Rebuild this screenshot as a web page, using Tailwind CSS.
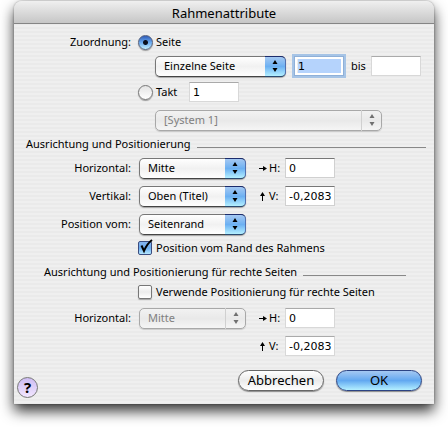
<!DOCTYPE html>
<html lang="de">
  <head>
    <meta charset="UTF-8" />
    <meta name="viewport" content="width=device-width, initial-scale=1.0" />
    <title>Rahmenattribute</title>
    <script src="https://cdn.jsdelivr.net/npm/@tailwindcss/browser@4"></script>
  </head>
  <body class="bg-white px-3.5 pt-px pb-6 font-['Noto_Sans','Open_Sans',sans-serif] text-[11px] leading-4 text-black">
    <main class="rounded-t-lg bg-[#eee] bg-[repeating-linear-gradient(180deg,#efefef_0px,#efefef_2px,#eaeaea_2px,#eaeaea_4px)] shadow-[0_0_2px_rgba(0,0,0,0.4),0_7px_14px_rgba(0,0,0,0.8)]">
      <header class="h-[23px] rounded-t-lg border-b border-[#858585] bg-linear-to-b from-[#f0f0f0] to-[#c6c6c6]">
        <h1 class="text-center text-[13px] leading-6">Rahmenattribute</h1>
      </header>

      <form class="pt-1.5">
        <!-- Zuordnung -->
        <div class="flex h-6 items-center">
          <span class="w-[117px] text-right">Zuordnung:</span>
          <input id="seite" type="radio" name="zuordnung" checked class="ml-[7px] size-[15px] appearance-none rounded-full border border-[#55607c] bg-[radial-gradient(circle_at_50%_50%,#0a1020_0px,#0a1020_2px,transparent_3px),linear-gradient(#2f5cb8,#6aaaf0_50%,#c4f0ff)] shadow-[0_1px_1px_rgba(0,0,0,0.35)]" />
          <label for="seite" class="ml-[3px]">Seite</label>
        </div>
        <div class="flex h-6 items-center pl-[141px]">
          <div class="relative h-[21px] w-[131px]">
            <select aria-label="Seitenbereich" class="block h-full w-full appearance-none rounded-[5px] border border-[#777] border-b-[#444] bg-linear-to-b from-white via-[#f1f1f1] to-white pl-2 shadow-[0_1px_1px_rgba(0,0,0,0.3)]">
              <option>Einzelne Seite</option>
            </select>
            <svg class="pointer-events-none absolute inset-y-0 right-0 h-[21px] w-[21px] rounded-r-[5px] border border-l-0 border-[#5070b0] border-t-[#1c2c6c] border-b-[#2a4a70] bg-linear-to-b from-[#a4c8f2] via-[#6cb0f2] to-[#b4f0ff]" viewBox="0 0 20 19"><path d="M10 3l2.5 4h-5zM10 15l2.5-4h-5z" fill="#000" /></svg>
          </div>
          <input type="text" value="1" aria-label="Von Seite" class="ml-2 h-5 w-[50px] border border-[#8fb0d8] bg-[#b5d3fc] bg-clip-content p-0.5 pl-[3px] font-['DejaVu_Sans',sans-serif] shadow-[inset_0_0_0_2px_#fff,0_0_0_2px_#a6c4e6] outline-none" />
          <label for="bis" class="ml-[7px] w-5">bis</label>
          <input id="bis" type="text" class="h-5 w-[50px] border border-[#d8d8d8] border-t-[#aaa] bg-white pl-[3px] font-['DejaVu_Sans',sans-serif]" />
        </div>
        <div class="flex h-7 items-center pl-[124px]">
          <input id="takt" type="radio" name="zuordnung" class="size-[15px] appearance-none rounded-full border border-[#777] bg-linear-to-b from-[#e4e4e4] to-white shadow-[0_1px_1px_rgba(0,0,0,0.35)]" />
          <label for="takt" class="ml-[3px] w-[33px]">Takt</label>
          <input type="text" value="1" aria-label="Taktnummer" class="h-5 w-[50px] border border-[#d8d8d8] border-t-[#aaa] bg-white pl-[3px] font-['DejaVu_Sans',sans-serif]" />
        </div>
        <div class="flex h-7 items-center pl-[141px]">
          <div class="relative h-[21px] w-[227px]">
            <select disabled aria-label="System" class="block h-full w-full appearance-none rounded-[5px] border border-[#a8a8a8] bg-linear-to-b from-[#f2f2f2] via-[#e9e9e9] to-[#f5f5f5] pl-2 text-[#808080] opacity-100 shadow-[0_1px_1px_rgba(0,0,0,0.15)]">
              <option>[System 1]</option>
            </select>
            <svg class="pointer-events-none absolute inset-y-0 right-0 h-[21px] w-[21px] border-l border-[#d0d0d0]" viewBox="0 0 20 21"><path d="M10 4l2.5 4h-5zM10 16l2.5-4h-5z" fill="#707070" /></svg>
          </div>
        </div>

        <!-- Ausrichtung und Positionierung -->
        <div class="mr-2 flex h-5 items-center pl-3">
          <h2>Ausrichtung und Positionierung</h2>
          <hr class="mt-1.5 ml-1.5 flex-1 border-[#888]" />
        </div>
        <div class="flex h-7 items-center">
          <label for="horizontal" class="w-[117px] text-right">Horizontal:</label>
          <div class="relative ml-2 h-[21px] w-[107px]">
            <select id="horizontal" class="block h-full w-full appearance-none rounded-[5px] border border-[#777] border-b-[#444] bg-linear-to-b from-white via-[#f1f1f1] to-white pl-2 shadow-[0_1px_1px_rgba(0,0,0,0.3)]">
              <option>Mitte</option>
            </select>
            <svg class="pointer-events-none absolute inset-y-0 right-0 h-[21px] w-[21px] rounded-r-[5px] border border-l-0 border-[#5070b0] border-t-[#1c2c6c] border-b-[#2a4a70] bg-linear-to-b from-[#a4c8f2] via-[#6cb0f2] to-[#b4f0ff]" viewBox="0 0 20 19"><path d="M10 3l2.5 4h-5zM10 15l2.5-4h-5z" fill="#000" /></svg>
          </div>
          <label for="h1" class="ml-3 flex w-[27px] items-center gap-0.5">
            <svg class="h-[9px] w-[9px]" viewBox="0 0 9 9"><path d="M1 4.5h6" stroke="#000" /><path d="M5 2l4 2.5-4 2.5z" /></svg>
            <span>H:</span>
          </label>
          <input id="h1" type="text" value="0" class="h-5 w-[50px] border border-[#d0d0d0] border-t-[#777] bg-white pl-[3px] font-['DejaVu_Sans',sans-serif]" />
        </div>
        <div class="flex h-7 items-center">
          <label for="vertikal" class="w-[117px] text-right">Vertikal:</label>
          <div class="relative ml-2 h-[21px] w-[107px]">
            <select id="vertikal" class="block h-full w-full appearance-none rounded-[5px] border border-[#777] border-b-[#444] bg-linear-to-b from-white via-[#f1f1f1] to-white pl-2 shadow-[0_1px_1px_rgba(0,0,0,0.3)]">
              <option>Oben (Titel)</option>
            </select>
            <svg class="pointer-events-none absolute inset-y-0 right-0 h-[21px] w-[21px] rounded-r-[5px] border border-l-0 border-[#5070b0] border-t-[#1c2c6c] border-b-[#2a4a70] bg-linear-to-b from-[#a4c8f2] via-[#6cb0f2] to-[#b4f0ff]" viewBox="0 0 20 19"><path d="M10 3l2.5 4h-5zM10 15l2.5-4h-5z" fill="#000" /></svg>
          </div>
          <label for="v1" class="ml-3 flex w-[27px] items-center gap-0.5">
            <svg class="h-[9px] w-[9px]" viewBox="0 0 9 9"><path d="M4.5 9V2" stroke="#000" /><path d="M2 4l2.5-4 2.5 4z" /></svg>
            <span>V:</span>
          </label>
          <input id="v1" type="text" value="-0,2083" class="h-5 w-[50px] border border-[#d0d0d0] border-t-[#777] bg-white pl-[3px] font-['DejaVu_Sans',sans-serif]" />
        </div>
        <div class="flex h-7 items-center">
          <label for="position" class="w-[117px] text-right">Position vom:</label>
          <div class="relative ml-2 h-[21px] w-[107px]">
            <select id="position" class="block h-full w-full appearance-none rounded-[5px] border border-[#777] border-b-[#444] bg-linear-to-b from-white via-[#f1f1f1] to-white pl-2 shadow-[0_1px_1px_rgba(0,0,0,0.3)]">
              <option>Seitenrand</option>
            </select>
            <svg class="pointer-events-none absolute inset-y-0 right-0 h-[21px] w-[21px] rounded-r-[5px] border border-l-0 border-[#5070b0] border-t-[#1c2c6c] border-b-[#2a4a70] bg-linear-to-b from-[#a4c8f2] via-[#6cb0f2] to-[#b4f0ff]" viewBox="0 0 20 19"><path d="M10 3l2.5 4h-5zM10 15l2.5-4h-5z" fill="#000" /></svg>
          </div>
        </div>
        <div class="flex h-5 items-center pl-[124px]">
          <div class="relative size-3.5">
            <input id="rand" type="checkbox" checked class="block size-3.5 appearance-none rounded-[2px] border border-[#3a4c80] bg-linear-to-b from-[#84b4ee] via-[#6cacf0] to-[#b4e8ff]" />
            <svg class="pointer-events-none absolute -top-0.5 left-0 h-4 w-4" viewBox="0 0 16 16"><path d="M3.5 6.5L6 12C8 7 10 4 14 1" fill="none" stroke="#000" stroke-width="2" /></svg>
          </div>
          <label for="rand" class="ml-1">Position vom Rand des Rahmens</label>
        </div>

        <!-- rechte Seiten -->
        <div class="mt-1 mr-7 flex h-5 items-center pl-[30px]">
          <h2>Ausrichtung und Positionierung für rechte Seiten</h2>
          <hr class="mt-1.5 ml-1.5 flex-1 border-[#888]" />
        </div>
        <div class="flex h-5 items-center pl-[124px]">
          <input id="rechte" type="checkbox" class="size-3.5 appearance-none rounded-[2px] border border-[#777] bg-linear-to-b from-white via-[#ececec] to-white shadow-[0_1px_1px_rgba(0,0,0,0.3)]" />
          <label for="rechte" class="ml-1">Verwende Positionierung für rechte Seiten</label>
        </div>
        <div class="mt-0.5 flex h-7 items-center">
          <label for="horizontal2" class="w-[117px] text-right">Horizontal:</label>
          <div class="relative ml-2 h-[21px] w-[107px]">
            <select id="horizontal2" disabled class="block h-full w-full appearance-none rounded-[5px] border border-[#a8a8a8] bg-linear-to-b from-[#f2f2f2] via-[#e9e9e9] to-[#f5f5f5] pl-2 text-[#808080] opacity-100 shadow-[0_1px_1px_rgba(0,0,0,0.15)]">
              <option>Mitte</option>
            </select>
            <svg class="pointer-events-none absolute inset-y-0 right-0 h-[21px] w-[21px] border-l border-[#d0d0d0]" viewBox="0 0 20 21"><path d="M10 4l2.5 4h-5zM10 16l2.5-4h-5z" fill="#707070" /></svg>
          </div>
          <label for="h2" class="ml-3 flex w-[27px] items-center gap-0.5">
            <svg class="h-[9px] w-[9px]" viewBox="0 0 9 9"><path d="M1 4.5h6" stroke="#000" /><path d="M5 2l4 2.5-4 2.5z" /></svg>
            <span>H:</span>
          </label>
          <input id="h2" type="text" value="0" class="h-5 w-[50px] border border-[#d8d8d8] border-t-[#aaa] bg-white pl-[3px] font-['DejaVu_Sans',sans-serif]" />
        </div>
        <div class="flex h-7 items-center pl-[244px]">
          <label for="v2" class="flex w-[27px] items-center gap-0.5">
            <svg class="h-[9px] w-[9px]" viewBox="0 0 9 9"><path d="M4.5 9V2" stroke="#000" /><path d="M2 4l2.5-4 2.5 4z" /></svg>
            <span>V:</span>
          </label>
          <input id="v2" type="text" value="-0,2083" class="h-5 w-[50px] border border-[#d8d8d8] border-t-[#aaa] bg-white pl-[3px] font-['DejaVu_Sans',sans-serif]" />
        </div>

        <footer class="flex items-end gap-3 pt-2.5 pr-3 pb-1.5 pl-[3px]">
          <button type="button" class="mr-auto size-[21px] rounded-full border border-[#777] bg-linear-to-b from-[#cdbcf2] to-[#f2e6ff] text-[15px] leading-[19px] font-bold">?</button>
          <button type="button" class="mb-[7px] h-[21px] w-[86px] rounded-full border border-[#666] bg-linear-to-b from-white via-[#ebebeb] to-white text-[13px] leading-[19px] shadow-[0_1px_1px_rgba(0,0,0,0.4)]">Abbrechen</button>
          <button type="submit" class="mb-[7px] h-[21px] w-[86px] rounded-full border border-[#2c4484] bg-linear-to-b from-[#a4c8f2] via-[#62a8f0] to-[#b4f0ff] text-[13px] leading-[19px] shadow-[0_1px_1px_rgba(0,0,0,0.4)]">OK</button>
        </footer>
      </form>
    </main>
  </body>
</html>
